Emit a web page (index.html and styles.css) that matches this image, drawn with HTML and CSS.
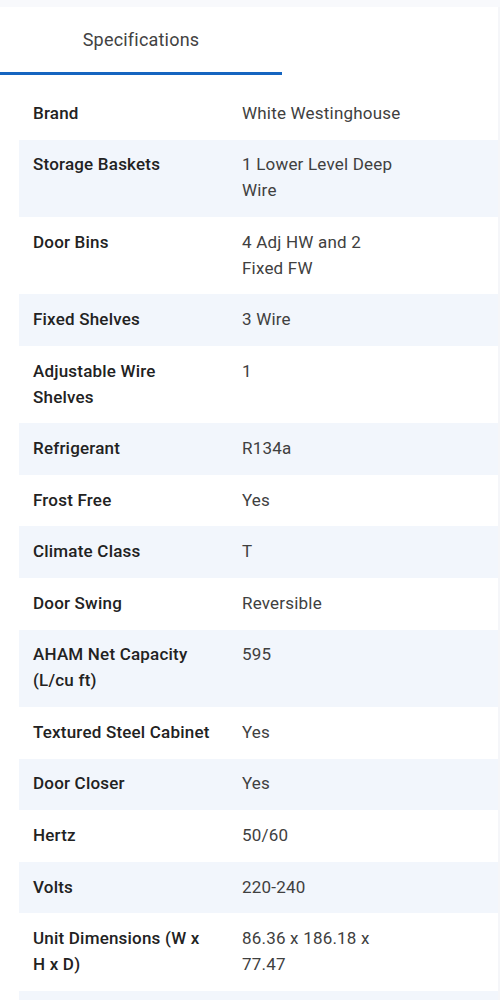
FILE: index.html
```html
<!DOCTYPE html>
<html>
<head>
<meta charset="utf-8">
<link rel="stylesheet" href="styles.css">
</head>
<body>
<div class="topstrip"></div>
<div class="card">
  <div class="tabs">
    <div class="tab active">Specifications</div>
  </div>
  <div class="specs">
    <div class="row"><div class="label">Brand</div><div class="value">White Westinghouse</div></div>
    <div class="row alt"><div class="label">Storage Baskets</div><div class="value">1 Lower Level Deep Wire</div></div>
    <div class="row"><div class="label">Door Bins</div><div class="value">4 Adj HW and 2 Fixed FW</div></div>
    <div class="row alt"><div class="label">Fixed Shelves</div><div class="value">3 Wire</div></div>
    <div class="row"><div class="label">Adjustable Wire Shelves</div><div class="value">1</div></div>
    <div class="row alt"><div class="label">Refrigerant</div><div class="value">R134a</div></div>
    <div class="row"><div class="label">Frost Free</div><div class="value">Yes</div></div>
    <div class="row alt"><div class="label">Climate Class</div><div class="value">T</div></div>
    <div class="row"><div class="label">Door Swing</div><div class="value">Reversible</div></div>
    <div class="row alt"><div class="label">AHAM Net Capacity (L/cu ft)</div><div class="value">595</div></div>
    <div class="row"><div class="label">Textured Steel Cabinet</div><div class="value">Yes</div></div>
    <div class="row alt"><div class="label">Door Closer</div><div class="value">Yes</div></div>
    <div class="row"><div class="label">Hertz</div><div class="value">50/60</div></div>
    <div class="row alt"><div class="label">Volts</div><div class="value">220-240</div></div>
    <div class="row"><div class="label">Unit Dimensions (W x H x D)</div><div class="value">86.36 x 186.18 x 77.47</div></div>
    <div class="row alt filler"></div>
  </div>
</div>
</body>
</html>
```

FILE: styles.css
```css
html, body {
  margin: 0;
  padding: 0;
  background: #ffffff;
  font-family: Roboto, "Liberation Sans", sans-serif;
}
.topstrip {
  height: 7px;
  background: #f8f9fc;
}
.card {
  background: #ffffff;
  border-right: 2px solid #f5f6f9;
  box-sizing: border-box;
}
.tabs {
  display: flex;
}
.tab {
  width: 282px;
  height: 65px;
  display: flex;
  align-items: center;
  justify-content: center;
  font-size: 18px;
  letter-spacing: 0.2px;
  color: #424242;
  border-bottom: 3px solid #1565c0;
}
.specs {
  margin: 13px 0 0 19px;
}
.row {
  display: grid;
  grid-template-columns: 209px 1fr;
  font-size: 17px;
  letter-spacing: 0.2px;
  line-height: 25.8px;
}
.row.alt {
  background: #f2f6fc;
}
.row.filler {
  height: 52px;
}
.label {
  padding: 12.9px 15px 12.9px 14px;
  font-weight: 500;
  color: #222222;
}
.value {
  padding: 12.9px 14px;
  color: #404040;
  max-width: 163px;
}
```
